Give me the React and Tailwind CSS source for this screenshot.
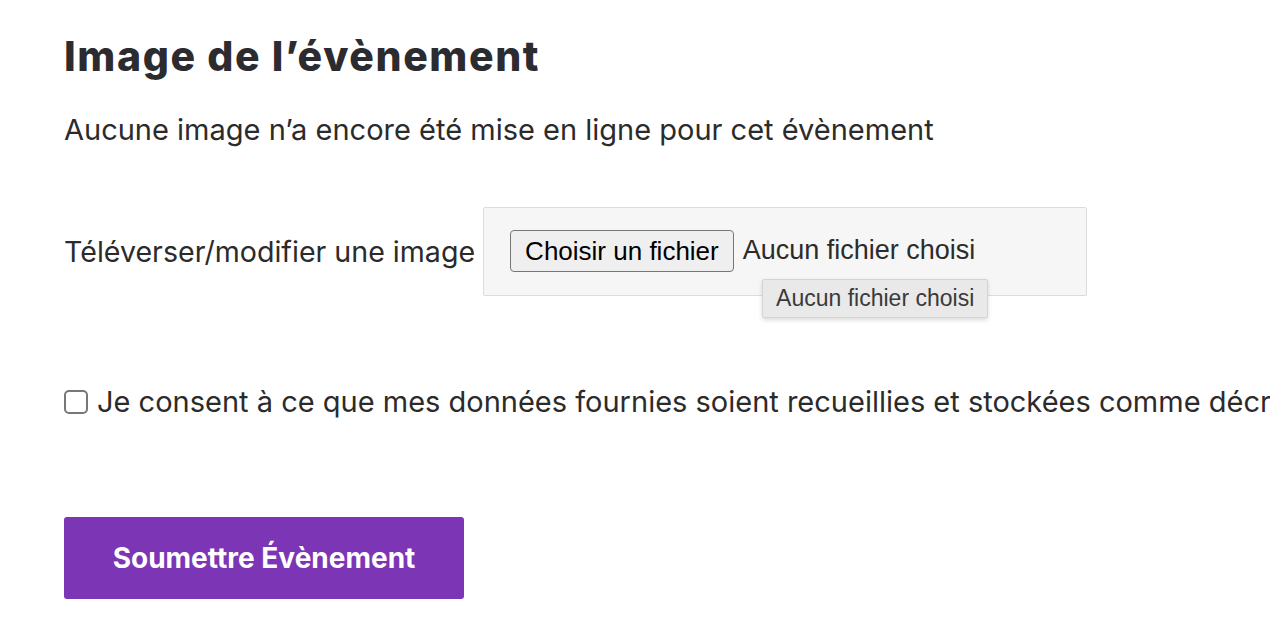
export default function App() {
  return (
    <div className="w-[1270px] h-[628px] overflow-hidden bg-white text-[#2b2b2b] font-['Inter',sans-serif]">
      <div className="pl-16 pt-[30px]">
        <h2 className="text-[41px] leading-[52px] font-extrabold tracking-[1.6px] text-[#2c2c30]">
          Image de l’évènement
        </h2>

        <p className="mt-[30px] text-[29px] leading-[36px]">
          Aucune image n’a encore été mise en ligne pour cet évènement
        </p>

        <div className="mt-[59px] flex items-center gap-[8px]">
          <label className="text-[28.6px] leading-[36px] whitespace-nowrap">Téléverser/modifier une image</label>
          <div className="relative w-[604px] h-[89px] bg-[#f6f6f6] border border-[#dcdcdc] rounded-[2px] flex items-center pl-[26px] pb-[2px] font-['Liberation_Sans',Arial,sans-serif]">
            <button className="h-[42px] px-[14px] bg-[#efefef] border border-[#767676] rounded-[4px] text-[26px] leading-none text-black">
              Choisir un fichier
            </button>
            <span className="ml-[9px] text-[27px] text-[#2b2b2b]">Aucun fichier choisi</span>
            <div className="absolute left-[278px] top-[71px] h-[39px] px-[13px] flex items-center bg-[#e9e9e9] border border-[#d4d4d4] rounded-[2px] shadow-[0_2px_4px_rgba(0,0,0,0.15)] text-[23px] text-[#3a3a3a] whitespace-nowrap">
              Aucun fichier choisi
            </div>
          </div>
        </div>

        <label className="mt-[88px] flex items-center gap-[9px] whitespace-nowrap text-[29px] leading-[36px]">
          <span className="w-[24px] h-[24px] border-2 border-[#777] rounded-[5px] bg-white shrink-0" />
          Je consent à ce que mes données fournies soient recueillies et stockées comme décrit dans la politique de confidentialité
        </label>

        <button className="mt-[97px] w-[400px] h-[82px] bg-[#7b35b5] rounded-[3px] text-white text-[28px] font-bold">
          Soumettre Évènement
        </button>
      </div>
    </div>
  );
}
